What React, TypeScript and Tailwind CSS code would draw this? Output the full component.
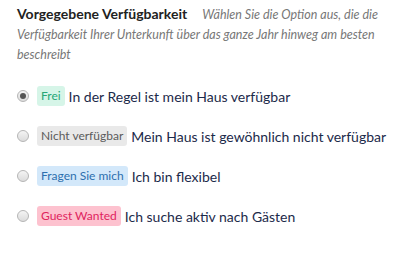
import React from 'react';

const options = [
  { label: 'Frei', text: 'In der Regel ist mein Haus verfügbar', badge: 'bg-[#d6f5e8] text-[#27a776]', checked: true },
  { label: 'Nicht verfügbar', text: 'Mein Haus ist gewöhnlich nicht verfügbar', badge: 'bg-[#e9e9e9] text-[#5b5b5b]', checked: false },
  { label: 'Fragen Sie mich', text: 'Ich bin flexibel', badge: 'bg-[#d3e8fa] text-[#2d6fae]', checked: false },
  { label: 'Guest Wanted', text: 'Ich suche aktiv nach Gästen', badge: 'bg-[#fdc2cf] text-[#e0245e]', checked: false },
];

function Radio({ checked }: { checked: boolean }) {
  return (
    <span className="w-[12px] h-[12px] rounded-full border border-[#b5b5b5] bg-gradient-to-b from-[#f4f4f4] to-[#dcdcdc] flex items-center justify-center shrink-0">
      {checked && <span className="w-[6px] h-[6px] rounded-full bg-[#555]" />}
    </span>
  );
}

export default function App() {
  return (
    <div className="bg-white w-[407px] h-[253px] pl-[17px] pr-[10px] pt-[4px]" style={{ fontFamily: 'Lato, "Noto Sans", sans-serif' }}>
      <p className="leading-[20px] text-[12.5px] text-[#777] italic pr-[12px]">
        <span className="not-italic font-bold text-[14px] text-[#222] mr-[15px]">Vorgegebene Verfügbarkeit</span>
        Wählen Sie die Option aus, die die Verfügbarkeit Ihrer Unterkunft über das ganze Jahr hinweg am besten beschreibt
      </p>
      <div className="flex flex-col gap-[20px] mt-[21px]">
        {options.map((o) => (
          <label key={o.label} className="flex items-center h-[20px] whitespace-nowrap">
            <Radio checked={o.checked} />
            <span className={`ml-[8px] h-[20px] px-[4px] rounded-[3px] text-[12px] leading-[20px] shrink-0 ${o.badge}`}>{o.label}</span>
            <span className="ml-[4px] text-[14px] text-[#1c2a4a]">{o.text}</span>
          </label>
        ))}
      </div>
    </div>
  );
}
